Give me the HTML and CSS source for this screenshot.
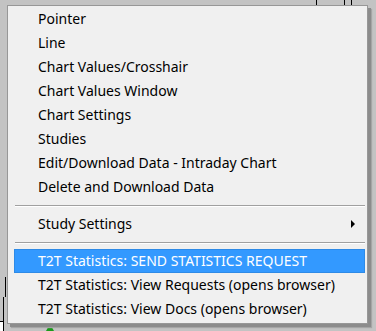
FILE: index.html
```html
<!DOCTYPE html>
<html lang="en">
<head>
    <meta charset="UTF-8">
    <meta name="viewport" content="width=device-width, initial-scale=1.0">
    <title>Chart Context Menu</title>
    <link rel="stylesheet" href="styles.css">
</head>
<body>

    <div class="chart-bits">
        <span class="tick t1"></span>
        <span class="tick t2"></span>
        <span class="tick t3"></span>
        <span class="bar-left"></span>
        <span class="bar-left2"></span>
        <span class="box-left"></span>
        <span class="marker"></span>
    </div>

    <div class="menu">
        <div class="item">Pointer</div>
        <div class="item">Line</div>
        <div class="item">Chart Values/Crosshair</div>
        <div class="item">Chart Values Window</div>
        <div class="item">Chart Settings</div>
        <div class="item">Studies</div>
        <div class="item">Edit/Download Data - Intraday Chart</div>
        <div class="item">Delete and Download Data</div>
        <div class="separator"></div>
        <div class="item has-sub">Study Settings <span class="arrow"></span></div>
        <div class="separator"></div>
        <div class="item active">T2T Statistics: SEND STATISTICS REQUEST</div>
        <div class="item">T2T Statistics: View Requests (opens browser)</div>
        <div class="item">T2T Statistics: View Docs (opens browser)</div>
    </div>

</body>
</html>
```

FILE: styles.css
```css
body {
    margin: 0;
    padding: 5px 0 0 7px;
    width: 376px;
    height: 331px;
    box-sizing: border-box;
    background-color: #c3c3c3;
    font-family: "Noto Sans", "Open Sans", sans-serif;
    overflow: hidden;
}

/* bits of the chart behind the menu */
.chart-bits .tick {
    position: absolute;
    top: 0;
    width: 1px;
    height: 5px;
    background-color: #000;
}

.t1 { left: 316px; }
.t2 { left: 344px; }
.t3 { left: 351px; }

.chart-bits .bar-left {
    position: absolute;
    left: 5px;
    top: 277px;
    width: 1px;
    height: 20px;
    background-color: #000;
}

.chart-bits .bar-left2 {
    position: absolute;
    left: 3px;
    top: 297px;
    width: 1px;
    height: 24px;
    background-color: #000;
}

.chart-bits .box-left {
    position: absolute;
    left: 0;
    top: 321px;
    width: 3px;
    height: 10px;
    background-color: #fff;
    border: 1px solid #000;
    border-left: none;
}

.chart-bits .marker {
    position: absolute;
    left: 46px;
    top: 324px;
    width: 0;
    height: 0;
    border-left: 4px solid transparent;
    border-right: 4px solid transparent;
    border-bottom: 7px solid #1a9a1a;
}

.menu {
    position: relative;
    width: 359px;
    padding: 1px 0 2px 0;
    background-color: #f0f0f0;
    border: 1px solid #979797;
    box-shadow: 3px 3px 0 #8c8c8c, 4px 4px 1px #a5a5a5;
}

.item {
    height: 24px;
    margin: 0 2px 0 6px;
    padding-left: 23px;
    font-size: 14px;
    line-height: 22px;
    color: #000;
    white-space: nowrap;
    box-sizing: border-box;
    border: 1px solid transparent;
}

.item.active {
    background-color: #3399ff;
    border-color: #2e8ae6;
    color: #fff;
}

.has-sub {
    display: flex;
    justify-content: space-between;
    align-items: center;
}

.arrow {
    width: 0;
    height: 0;
    margin-right: 9px;
    border-top: 4px solid transparent;
    border-bottom: 4px solid transparent;
    border-left: 4px solid #000;
}

.separator {
    height: 1px;
    margin: 6px 2px 5px 7px;
    background-color: #a0a0a0;
    border-bottom: 1px solid #ffffff;
}
```
